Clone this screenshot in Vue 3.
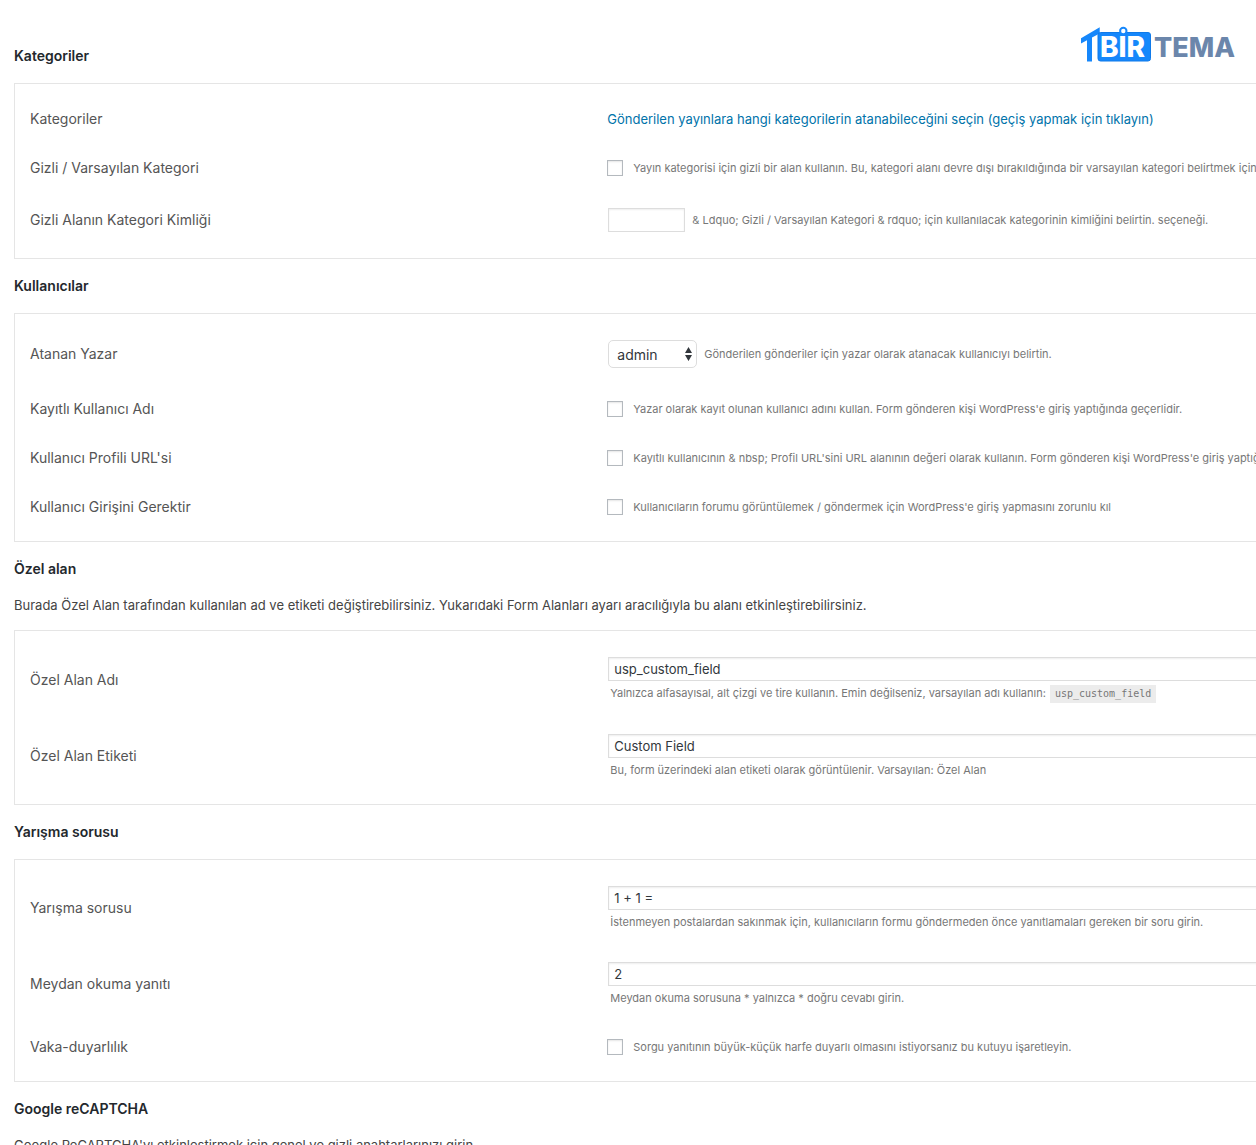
<template>
  <main class="settings">
    <svg class="logo" width="160" height="40" viewBox="0 0 160 40" role="img" aria-label="1BİRTEMA">
      <path class="logo-mark" d="M3 13.300 21.700 2.300V8.500L14 12.600V36.500H9V15.200L3 18.500Z" />
      <rect class="logo-mark logo-plate" x="20" y="7.500" width="52.500" height="28.500" rx="2.500" />
      <circle class="logo-dot" cx="45.300" cy="6" r="3.200" />
      <text class="logo-white" x="22" y="32">BIR</text>
      <text class="logo-grey" x="76" y="32">TEMA</text>
    </svg>

    <section v-for="section in sections" :key="section.title">
      <h3>{{ section.title }}</h3>
      <p v-if="section.intro" class="intro">{{ section.intro }}</p>
      <div v-if="section.rows" class="panel">
        <table>
          <tbody>
            <tr v-for="row in section.rows" :key="row.id" :class="[row.type, { coded: row.code }]">
              <th scope="row"><label :for="row.id">{{ row.label }}</label></th>
              <td>
                <a v-if="row.type === 'link'" :id="row.id" href="#">{{ row.text }}</a>
                <div v-else-if="row.type === 'check'" class="inline">
                  <input :id="row.id" type="checkbox" />
                  <label class="desc" :for="row.id">{{ row.text }}</label>
                </div>
                <div v-else-if="row.type === 'small'" class="inline">
                  <input :id="row.id" class="field short" type="text" />
                  <label class="desc" :for="row.id">{{ row.text }}</label>
                </div>
                <div v-else-if="row.type === 'select'" class="inline">
                  <span class="select-box">
                    <select :id="row.id">
                      <option>admin</option>
                    </select>
                    <svg width="7" height="14" viewBox="0 0 7 14" aria-hidden="true">
                      <path d="M3.500 0 7 6H0ZM0 8H7L3.500 14Z" />
                    </svg>
                  </span>
                  <label class="desc" :for="row.id">{{ row.text }}</label>
                </div>
                <template v-else>
                  <input :id="row.id" v-model="row.value" class="field wide" type="text" />
                  <div class="desc help">
                    {{ row.text }} <code v-if="row.code">{{ row.code }}</code>
                  </div>
                </template>
              </td>
            </tr>
          </tbody>
        </table>
      </div>
    </section>
  </main>
</template>

<script setup>
import { ref } from "vue";

const sections = ref([
  {
    title: "Kategoriler",
    rows: [
      { id: "categories", type: "link", label: "Kategoriler", text: "Gönderilen yayınlara hangi kategorilerin atanabileceğini seçin (geçiş yapmak için tıklayın)" },
      { id: "use-cat", type: "check", label: "Gizli / Varsayılan Kategori", text: "Yayın kategorisi için gizli bir alan kullanın. Bu, kategori alanı devre dışı bırakıldığında bir varsayılan kategori belirtmek için" },
      { id: "cat-id", type: "small", label: "Gizli Alanın Kategori Kimliği", text: "& Ldquo; Gizli / Varsayılan Kategori & rdquo; için kullanılacak kategorinin kimliğini belirtin. seçeneği." },
    ],
  },
  {
    title: "Kullanıcılar",
    rows: [
      { id: "author", type: "select", label: "Atanan Yazar", text: "Gönderilen gönderiler için yazar olarak atanacak kullanıcıyı belirtin." },
      { id: "use-author", type: "check", label: "Kayıtlı Kullanıcı Adı", text: "Yazar olarak kayıt olunan kullanıcı adını kullan. Form gönderen kişi WordPress'e giriş yaptığında geçerlidir." },
      { id: "use-url", type: "check", label: "Kullanıcı Profili URL'si", text: "Kayıtlı kullanıcının & nbsp; Profil URL'sini URL alanının değeri olarak kullanın. Form gönderen kişi WordPress'e giriş yaptığında" },
      { id: "logged-in", type: "check", label: "Kullanıcı Girişini Gerektir", text: "Kullanıcıların forumu görüntülemek / göndermek için WordPress'e giriş yapmasını zorunlu kıl" },
    ],
  },
  {
    title: "Özel alan",
    intro: "Burada Özel Alan tarafından kullanılan ad ve etiketi değiştirebilirsiniz. Yukarıdaki Form Alanları ayarı aracılığıyla bu alanı etkinleştirebilirsiniz.",
    rows: [
      { id: "custom-name", type: "text", label: "Özel Alan Adı", value: "usp_custom_field", text: "Yalnızca alfasayısal, alt çizgi ve tire kullanın. Emin değilseniz, varsayılan adı kullanın:", code: "usp_custom_field" },
      { id: "custom-label", type: "text", label: "Özel Alan Etiketi", value: "Custom Field", text: "Bu, form üzerindeki alan etiketi olarak görüntülenir. Varsayılan: Özel Alan" },
    ],
  },
  {
    title: "Yarışma sorusu",
    rows: [
      { id: "question", type: "text", label: "Yarışma sorusu", value: "1 + 1 =", text: "İstenmeyen postalardan sakınmak için, kullanıcıların formu göndermeden önce yanıtlamaları gereken bir soru girin." },
      { id: "response", type: "text", label: "Meydan okuma yanıtı", value: "2", text: "Meydan okuma sorusuna * yalnızca * doğru cevabı girin." },
      { id: "casing", type: "check", label: "Vaka-duyarlılık", text: "Sorgu yanıtının büyük-küçük harfe duyarlı olmasını istiyorsanız bu kutuyu işaretleyin." },
    ],
  },
  {
    title: "Google reCAPTCHA",
    intro: "Google ReCAPTCHA'yı etkinleştirmek için genel ve gizli anahtarlarınızı girin",
  },
]);
</script>

<style>
body {
  background: #fff;
}
</style>

<style scoped>
.settings {
  position: relative;
  height: 100vh;
  box-sizing: border-box;
  padding: 29px 0 0 14px;
  overflow: hidden;
  font-family: Inter, Roboto, "Liberation Sans", sans-serif;
  font-size: 13px;
  color: #444;
}

.logo {
  position: absolute;
  top: 25px;
  right: 18px;
}

.logo-mark {
  fill: #1687fb;
}

.logo-plate {
  stroke: #0f7aea;
}

.logo-dot {
  fill: #fff;
  stroke: #1687fb;
  stroke-width: 2;
}

.logo text {
  font-family: Inter, sans-serif;
  font-size: 28px;
  font-weight: 800;
}

.logo .logo-white {
  fill: #fff;
}

.logo .logo-grey {
  font-size: 27px;
  fill: #6b86ab;
}

h3 {
  margin: 0;
  padding: 17px 0;
  font-size: 14px;
  line-height: 20px;
  font-weight: 600;
  color: #23282d;
}

.intro {
  margin: 0 0 16px;
  line-height: 18px;
  white-space: nowrap;
}

.panel {
  padding: 10px 0;
  border: 1px solid #e5e5e5;
  border-right: 0;
}

table {
  width: 100%;
  table-layout: fixed;
  border-collapse: collapse;
}

th {
  width: 47%;
  box-sizing: border-box;
  padding: 0 15px;
  font-size: 14px;
  line-height: 20px;
  font-weight: 400;
  text-align: left;
  color: #555;
}

td {
  padding: 0 0 0 9px;
  overflow: hidden;
  white-space: nowrap;
}

.link,
.check {
  height: 49px;
}

.small {
  height: 56px;
}

.select {
  height: 60px;
}

.text {
  height: 76px;
}

.text.coded {
  height: 77px;
}

.text td {
  padding-top: 16px;
  vertical-align: top;
}

a {
  color: #0073aa;
  text-decoration: none;
}

.inline {
  display: flex;
  align-items: center;
}

.desc {
  font-size: 11px;
  line-height: 18px;
  color: #777;
}

input,
select {
  box-sizing: border-box;
  flex-shrink: 0;
  margin: 0;
  border: 1px solid #ddd;
  background: #fff;
  font-family: inherit;
  color: #32373c;
}

input[type="checkbox"] {
  appearance: none;
  width: 16px;
  height: 16px;
  margin-right: 10px;
  border-color: #b4b9be;
  box-shadow: inset 0 1px 2px rgba(0, 0, 0, 0.1);
}

.field {
  height: 24px;
  margin-left: 1px;
  padding: 0 5px;
  font-size: 13px;
  box-shadow: inset 0 1px 2px rgba(0, 0, 0, 0.07);
}

.short {
  width: 77px;
  margin-right: 7px;
}

.wide {
  display: block;
  width: 100%;
  border-right: 0;
}

.help {
  margin: 3px 0 0 3px;
}

code {
  display: inline-block;
  margin: 0 1px;
  padding: 0 5px;
  background: #ececec;
  font-family: "DejaVu Sans Mono", monospace;
  font-size: 10px;
}

.select-box {
  position: relative;
  margin: 0 7px 0 1px;
}

.select-box select {
  appearance: none;
  display: block;
  width: 89px;
  height: 28px;
  padding: 0 8px;
  border-radius: 5px;
  font-size: 14px;
}

.select-box svg {
  position: absolute;
  top: 7px;
  right: 5px;
  fill: #32373c;
  pointer-events: none;
}
</style>
